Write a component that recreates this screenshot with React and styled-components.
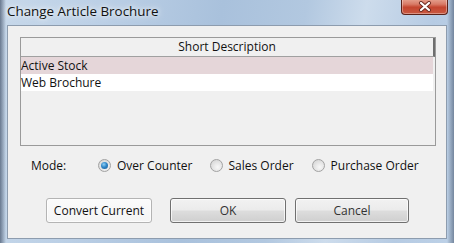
import React from "react";
import styled, { createGlobalStyle } from "styled-components";

const Global = createGlobalStyle`
  html, body { margin: 0; padding: 0; background: #9fb8d4; }
  body { width: 454px; height: 243px; overflow: hidden; font-family: "Open Sans", "Liberation Sans", sans-serif; }
  * { box-sizing: border-box; }
`;

const Frame = styled.div`
  width: 454px;
  height: 243px;
  display: flex;
  flex-direction: column;
  padding: 0 7px 4px 7px;
  background:
    linear-gradient(90deg, rgba(30,45,70,0.55) 0px, rgba(30,45,70,0) 6px, rgba(0,0,0,0) 447px, rgba(30,45,70,0.45) 454px),
    linear-gradient(100deg, #c7d8ea 0%, #bcd0e6 20%, #a9c1dc 45%, #b2c8e0 62%, #cddcec 74%, #b6cbe3 88%, #bdd1e7 100%);
`;

const TitleBar = styled.div`
  height: 25px;
  display: flex;
  align-items: flex-start;
  justify-content: space-between;
  flex-shrink: 0;
`;

const Title = styled.div`
  font-size: 13.4px;
  line-height: 18px;
  padding-top: 2px;
  color: #111;
  text-shadow: 0 0 8px rgba(255,255,255,0.9), 0 0 4px rgba(255,255,255,0.8);
`;

const CloseButton = styled.div`
  width: 47px;
  height: 16px;
  margin-top: -1px;
  margin-right: -1px;
  border: 1px solid #5a2219;
  border-top: none;
  border-radius: 0 0 4px 4px;
  background: linear-gradient(180deg, #e6a391 0%, #d87a66 35%, #c4452f 55%, #c95a42 100%);
  box-shadow: inset 0 0 0 1px rgba(255,255,255,0.35);
  display: flex;
  align-items: center;
  justify-content: center;
`;

const Client = styled.div`
  flex: 1;
  background: #f0f0f0;
  border: 1px solid #8d9cae;
  display: flex;
  flex-direction: column;
  padding: 11px 10px 0 12px;
`;

const ListBox = styled.div`
  width: 416px;
  height: 109px;
  border: 1px solid #9a9a9a;
  background: #f0f0f0;
  display: flex;
  flex-direction: column;
`;

const Header = styled.div`
  height: 19px;
  border-right: 2px solid #6e6e6e;
  border-bottom: 1px solid #a0a0a0;
  background: #f0f0f0;
  font-size: 12px;
  line-height: 18px;
  text-align: center;
  color: #111;
`;

const Row = styled.div`
  height: 17px;
  font-size: 12px;
  line-height: 17px;
  color: #111;
  background: ${(p) => (p.$selected ? "#e5d6d9" : "#ffffff")};
  margin-right: 2px;
`;

const ModeRow = styled.div`
  display: flex;
  align-items: center;
  margin-top: 12px;
  padding-left: 11px;
  height: 15px;
  font-size: 12px;
  color: #111;
`;

const ModeLabel = styled.div`
  width: 67px;
`;

const Option = styled.label`
  display: flex;
  align-items: center;
  gap: 6px;
  margin-right: ${(p) => p.$gap || 0}px;
`;

const Radio = styled.span`
  width: 13px;
  height: 13px;
  border-radius: 50%;
  border: 1px solid #a2a2a2;
  background: radial-gradient(circle at 60% 65%, #f8f8f8 0%, #e6e6e6 45%, #cfcfcf 100%);
  display: flex;
  align-items: center;
  justify-content: center;
  flex-shrink: 0;
  &::after {
    content: "";
    display: ${(p) => (p.$checked ? "block" : "none")};
    width: 7px;
    height: 7px;
    border-radius: 50%;
    background: radial-gradient(circle at 40% 35%, #8fd0f5 0%, #2f86c8 45%, #1c5a93 100%);
  }
`;

const ButtonRow = styled.div`
  display: flex;
  margin-top: 25px;
  padding-left: 26px;
`;

const Button = styled.div`
  width: ${(p) => p.$w}px;
  height: 25px;
  margin-right: ${(p) => p.$gap || 0}px;
  border: 1px solid ${(p) => (p.$flat ? "#b4b4b4" : "#707070")};
  border-radius: 3px;
  background: ${(p) =>
    p.$flat
      ? "linear-gradient(180deg, #fbfbfb 0%, #f4f4f4 100%)"
      : "linear-gradient(180deg, #f2f2f2 0%, #ebebeb 48%, #dddddd 52%, #cfcfcf 100%)"};
  box-shadow: inset 0 0 0 1px rgba(255,255,255,0.7);
  font-size: 12px;
  line-height: 23px;
  text-align: center;
  color: ${(p) => (p.$flat ? "#111" : "#333")};
`;

export default function App() {
  return (
    <>
      <Global />
      <Frame>
        <TitleBar>
          <Title>Change Article Brochure</Title>
          <CloseButton>
            <svg width="14" height="11" viewBox="0 0 14 11">
              <path d="M3 2 L11 9 M11 2 L3 9" stroke="#6b2a20" strokeWidth="4" strokeLinecap="round" />
              <path d="M3 2 L11 9 M11 2 L3 9" stroke="#ffffff" strokeWidth="2.2" strokeLinecap="round" />
            </svg>
          </CloseButton>
        </TitleBar>
        <Client>
          <ListBox>
            <Header>Short Description</Header>
            <Row $selected>Active Stock</Row>
            <Row>Web Brochure</Row>
          </ListBox>
          <ModeRow>
            <ModeLabel>Mode:</ModeLabel>
            <Option $gap={17}>
              <Radio $checked />
              Over Counter
            </Option>
            <Option $gap={18}>
              <Radio />
              Sales Order
            </Option>
            <Option>
              <Radio />
              Purchase Order
            </Option>
          </ModeRow>
          <ButtonRow>
            <Button $w={106} $gap={18} $flat>Convert Current</Button>
            <Button $w={116} $gap={9}>OK</Button>
            <Button $w={114}>Cancel</Button>
          </ButtonRow>
        </Client>
      </Frame>
    </>
  );
}
